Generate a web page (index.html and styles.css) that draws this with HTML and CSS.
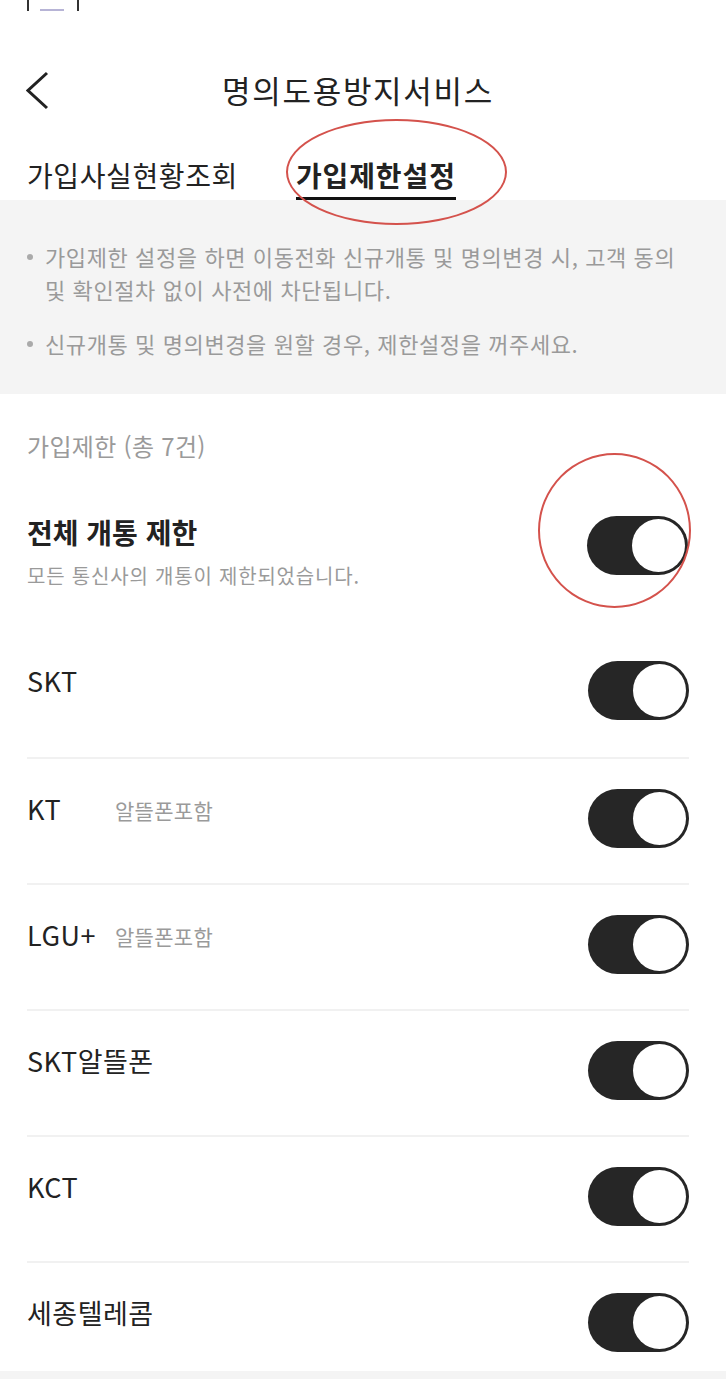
FILE: index.html
```html
<!DOCTYPE html>
<html lang="ko">
<head>
<meta charset="utf-8">
<link rel="stylesheet" href="styles.css">
</head>
<body>
<div class="page">
  <div class="stub"><span class="stub-mark"></span></div>
  <header class="header">
    <svg class="back" width="24" height="40" viewBox="0 0 24 40"><polyline points="21,2 2,19.5 21,37" fill="none" stroke="#222" stroke-width="3"/></svg>
    <h1 class="title">명의도용방지서비스</h1>
  </header>
  <nav class="tabs">
    <span class="tab">가입사실현황조회</span>
    <span class="tab tab-active">가입제한설정</span>
  </nav>
  <section class="notice">
    <ul class="notice-list">
      <li>가입제한 설정을 하면 이동전화 신규개통 및 명의변경 시, 고객 동의 및 확인절차 없이 사전에 차단됩니다.</li>
      <li>신규개통 및 명의변경을 원할 경우, 제한설정을 꺼주세요.</li>
    </ul>
  </section>
  <p class="count">가입제한 (총 7건)</p>
  <div class="all-row">
    <div class="all-text">
      <div class="all-title">전체 개통 제한</div>
      <div class="all-sub">모든 통신사의 개통이 제한되었습니다.</div>
    </div>
    <span class="toggle"><span class="knob"></span></span>
  </div>
  <ul class="carriers">
    <li class="row"><span class="name">SKT</span><span class="toggle"><span class="knob"></span></span></li>
    <li class="row"><span class="name">KT</span><span class="tag">알뜰폰포함</span><span class="toggle"><span class="knob"></span></span></li>
    <li class="row"><span class="name">LGU+</span><span class="tag">알뜰폰포함</span><span class="toggle"><span class="knob"></span></span></li>
    <li class="row"><span class="name">SKT알뜰폰</span><span class="toggle"><span class="knob"></span></span></li>
    <li class="row"><span class="name">KCT</span><span class="toggle"><span class="knob"></span></span></li>
    <li class="row row-last"><span class="name">세종텔레콤</span><span class="toggle"><span class="knob"></span></span></li>
  </ul>
  <div class="footer-band"></div>
  <span class="mark mark-tab"></span>
  <span class="mark mark-toggle"></span>
</div>
</body>
</html>
```
FILE: styles.css
```css
* { box-sizing: border-box; }
html, body { margin: 0; padding: 0; background: #fff; }
body {
  font-family: "Noto Sans CJK KR", "Noto Sans", sans-serif;
  color: #222;
  width: 726px;
  overflow: hidden;
}
.page { position: relative; width: 726px; }

.stub {
  margin-left: 27px;
  width: 52px;
  height: 11px;
  border-left: 2.5px solid #333;
  border-right: 2.5px solid #333;
  position: relative;
}
.stub-mark {
  position: absolute;
  left: 11px;
  bottom: 0;
  width: 24px;
  height: 2px;
  background: #b7b4d6;
}

.header {
  margin-top: 39px;
  height: 78px;
  display: flex;
  align-items: center;
  justify-content: center;
  position: relative;
}
.back { position: absolute; left: 26px; top: 21px; }
.title {
  margin: 0 10px 0 0;
  font-size: 31px;
  font-weight: 400;
  letter-spacing: 1.7px;
  color: #222;
}

.tabs {
  display: flex;
  gap: 58px;
  padding-left: 27px;
  height: 72px;
  align-items: flex-end;
}
.tab {
  font-size: 28px;
  line-height: 36px;
  letter-spacing: 0.6px;
  padding-bottom: 7px;
  color: #222;
}
.tab-active {
  font-weight: 700;
  letter-spacing: 0.9px;
  padding-bottom: 4px;
  border-bottom: 3px solid #111;
}

.notice {
  background: #f4f4f4;
  padding: 40px 38px 34px 27px;
  height: 194px;
}
.notice-list { list-style: none; margin: 0; padding: 0; }
.notice-list li {
  position: relative;
  padding-left: 18px;
  font-size: 22px;
  line-height: 33px;
  letter-spacing: 0.6px;
  color: #9a9a9a;
}
.notice-list li + li { margin-top: 21px; }
.notice-list li::before {
  content: "";
  position: absolute;
  left: 0;
  top: 14px;
  width: 6px;
  height: 6px;
  border-radius: 50%;
  background: #aaa;
}

.count {
  margin: 37px 0 0 27px;
  font-size: 24px;
  line-height: 30px;
  letter-spacing: 0.3px;
  color: #9a9a9a;
}

.all-row {
  display: flex;
  justify-content: space-between;
  align-items: flex-start;
  padding: 0 38px 0 27px;
  height: 170px;
}
.all-text { padding-top: 53px; }
.all-title {
  font-size: 28px;
  line-height: 36px;
  font-weight: 700;
  letter-spacing: 0;
  color: #222;
}
.all-sub {
  margin-top: 12px;
  font-size: 20px;
  line-height: 28px;
  letter-spacing: 0.8px;
  color: #9a9a9a;
}
.all-row .toggle { margin-top: 55px; }

.toggle {
  position: relative;
  display: block;
  flex: none;
  width: 101px;
  height: 59px;
  border-radius: 30px;
  background: #262626;
}
.knob {
  position: absolute;
  right: 3px;
  top: 3px;
  width: 53px;
  height: 53px;
  border-radius: 50%;
  background: #fff;
}

.carriers {
  list-style: none;
  margin: 0;
  padding: 0 37px 0 27px;
}
.row {
  display: flex;
  align-items: flex-start;
  height: 126px;
  border-top: 2px solid #f1f1f1;
}
.row:first-child { border-top: 0; }
.name {
  min-width: 80px;
  padding-top: 32px;
  font-size: 27px;
  line-height: 36px;
  letter-spacing: 0.5px;
  color: #222;
}
.tag {
  margin-left: 8px;
  padding-top: 36px;
  font-size: 21px;
  line-height: 30px;
  letter-spacing: 0.3px;
  color: #9a9a9a;
}
.row .toggle { margin-left: auto; margin-top: 30px; }
.row-last { height: 110px; }

.footer-band {
  height: 40px;
  background: #f4f4f4;
}

.mark {
  position: absolute;
  border: 2.5px solid #d4524c;
  border-radius: 50%;
  pointer-events: none;
}
.mark-tab { left: 286px; top: 119px; width: 221px; height: 106px; }
.mark-toggle { left: 538px; top: 453px; width: 153px; height: 155px; }
```
